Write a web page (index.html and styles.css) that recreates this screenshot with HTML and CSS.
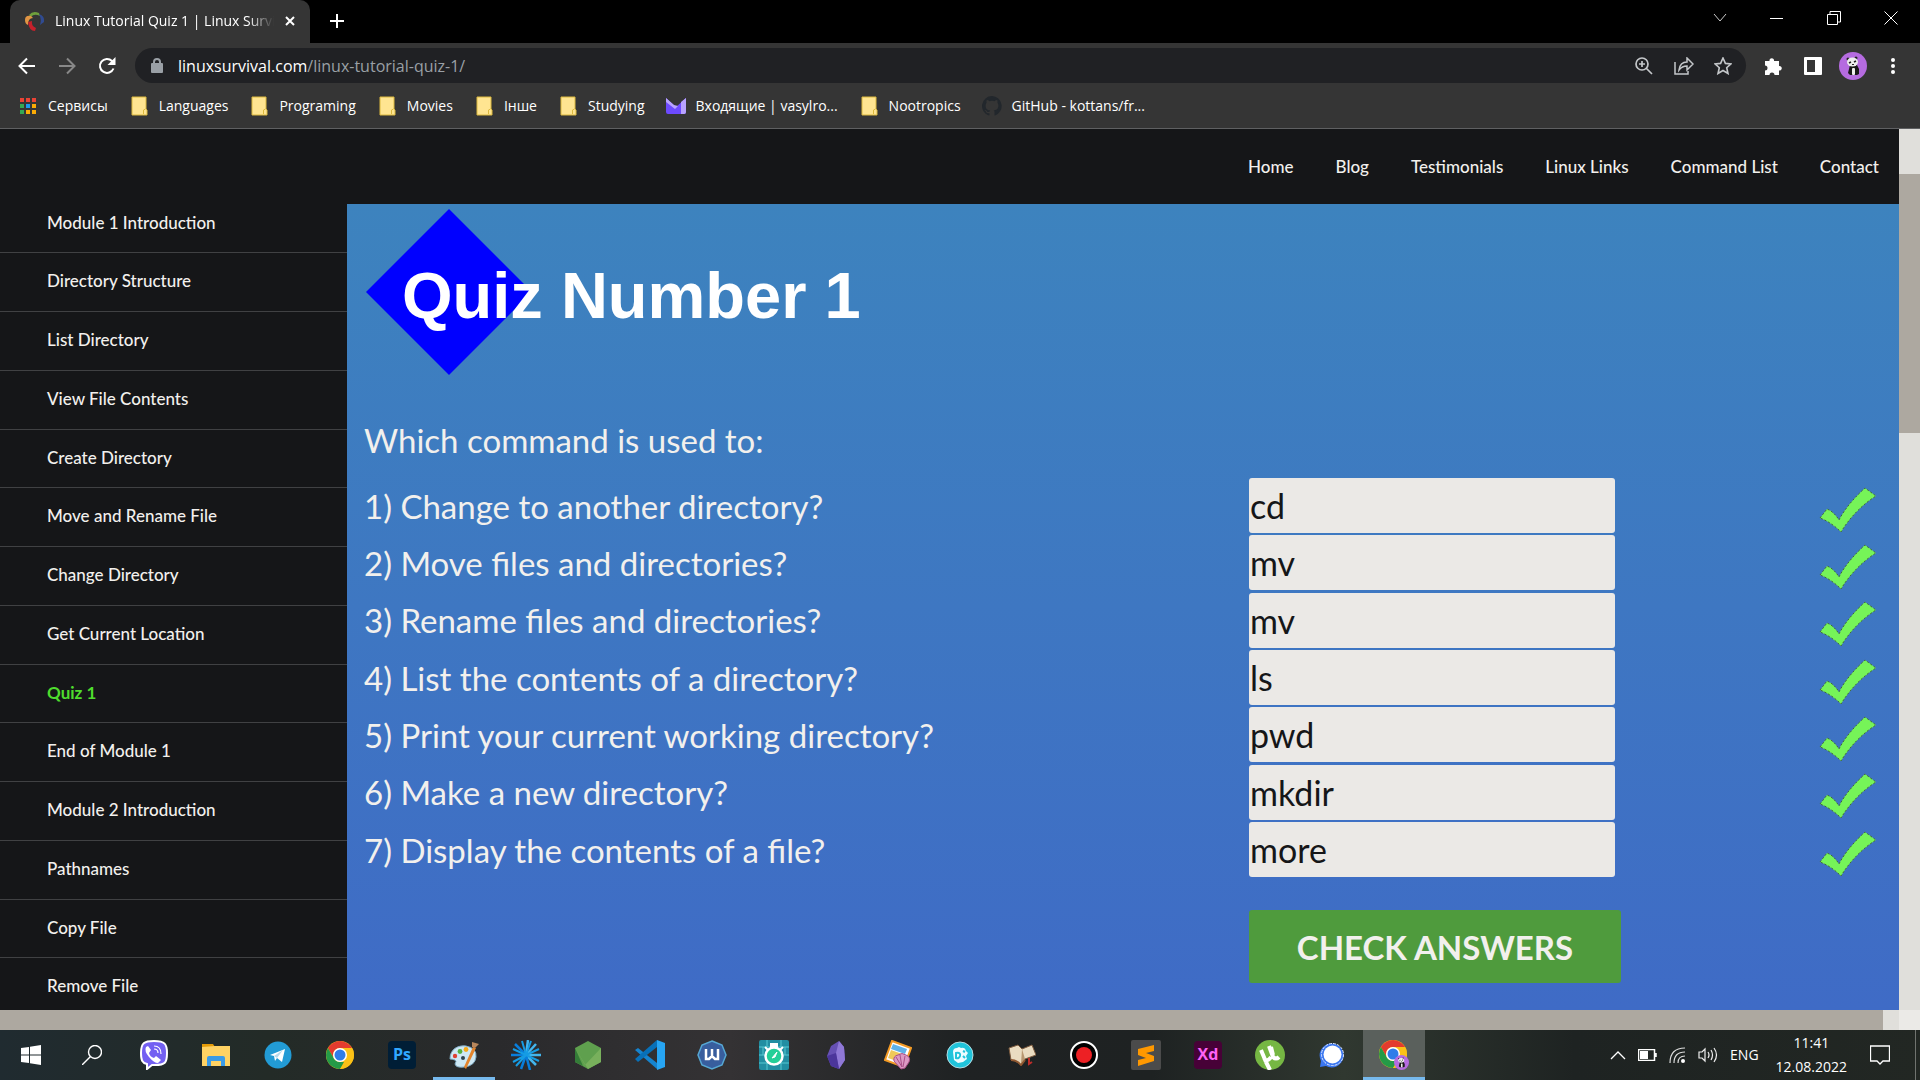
FILE: index.html
```html
<!DOCTYPE html>
<html lang="en">
<head>
<meta charset="utf-8">
<title>Linux Tutorial Quiz 1 | Linux Survival</title>
<link rel="stylesheet" href="styles.css">
</head>
<body>
<svg class="defs" aria-hidden="true">
  <symbol id="folder" viewBox="0 0 20 20"><path d="M3 1h14v12l1 1v5H3z" fill="#ffe591" stroke="#dcb93f"/><path d="M14.500 18v-4l2-1" fill="none" stroke="#dcb93f"/></symbol>
  <symbol id="tick" viewBox="0 0 58 46"><path d="M1 31l7-9c5 2 9 6 12 11C26 21 37 9 46 1l11 8C44 17 31 30 22 45 16 39 9 34 1 31z" fill="#76f458" stroke="#426b35" stroke-dasharray="2 2"/></symbol>
  <symbol id="chrome" viewBox="0 0 28 28"><circle cx="14" cy="14" r="14" fill="#fbc116"/><path d="M1.900 7A14 14 0 0 1 26.100 7H14a7 7 0 0 0-6 10.500z" fill="#e33b2e"/><path d="M1.900 7l6.100 10.500A7 7 0 0 0 14 21h6l-6 7A14 14 0 0 1 1.900 7z" fill="#249a47"/><path d="M20 17.500L14 28a14 14 0 0 0 12.100-21H14z" fill="#fbc116"/><circle cx="14" cy="14" r="7" fill="#fff"/><circle cx="14" cy="14" r="5.500" fill="#2f7de9"/></symbol>
  <symbol id="panda" viewBox="0 0 28 28"><circle cx="14" cy="14" r="14" fill="#b56be0"/><path d="M11 13h7l2 4v5l-2 1h-7l-2-2 1-4z" fill="#181818"/><rect x="13" y="16" width="3" height="7" rx="1" fill="#eee"/><circle cx="9" cy="7" r="1.500" fill="#222"/><circle cx="17" cy="6" r="1.500" fill="#222"/><ellipse cx="13.500" cy="10" rx="5.500" ry="4.500" fill="#eee"/><path d="M10 11l2-1M15 10l2-1" stroke="#222" stroke-width="1.600"/><path d="M13 12.500h2" stroke="#222"/></symbol>
</svg>

<header class="browser">
  <div class="tabstrip">
    <div class="tab">
      <svg width="20" height="20" viewBox="0 0 20 20"><path d="M4 4q4-5 10-2l1 3q-6-3-9 1z" fill="#6f9f3c"/><path d="M0 9q0-5 6-4l2 2q-5 0-5 7-3-1-3-5z" fill="#e09544"/><path d="M3 11l4-1q-1 5 4 7l-1 3q-6 0-7-9z" fill="#c5212b"/><path d="M14 3q6 2 5 8l-4 3q2-5-1-11z" fill="#304b91"/></svg>
      <span class="tab-title">Linux Tutorial Quiz 1 | Linux Survival</span>
      <button class="icon-btn small" aria-label="Close tab"><svg width="10" height="10" viewBox="0 0 10 10"><path d="M1 1l8 8M9 1l-8 8" stroke="#fff" stroke-width="2"/></svg></button>
    </div>
    <button class="icon-btn new-tab" aria-label="New tab"><svg width="16" height="16" viewBox="0 0 16 16"><path d="M8 1v14M1 8h14" stroke="#fff" stroke-width="2"/></svg></button>
    <div class="window-controls">
      <button aria-label="Search tabs"><svg width="14" height="14" viewBox="0 0 14 14"><path d="M1 3l6 7 6-7" fill="none" stroke="#ccc"/></svg></button>
      <button aria-label="Minimize"><svg width="14" height="14" viewBox="0 0 14 14"><path d="M0 7.500h13" stroke="#fff"/></svg></button>
      <button aria-label="Restore"><svg width="14" height="14" viewBox="0 0 14 14"><path d="M.5 3.500h10v10H.5zM3 3V.5h10.500V11H11" fill="none" stroke="#fff"/></svg></button>
      <button aria-label="Close"><svg width="14" height="14" viewBox="0 0 14 14"><path d="M.5 .5l13 13M13.500 .5l-13 13" stroke="#fff"/></svg></button>
    </div>
  </div>
  <div class="toolbar">
    <div class="history">
      <button class="icon-btn" aria-label="Back"><svg width="18" height="18" viewBox="0 0 18 18"><path d="M17 9H2M9 1.500L1.500 9 9 16.500" fill="none" stroke="#fff" stroke-width="2"/></svg></button>
      <button class="icon-btn" aria-label="Forward"><svg width="18" height="18" viewBox="0 0 18 18"><path d="M1 9h15M9 1.500L16.500 9 9 16.500" fill="none" stroke="#888" stroke-width="2"/></svg></button>
      <button class="icon-btn" aria-label="Reload"><svg width="18" height="18" viewBox="0 0 18 18"><path d="M15.500 11.500A7 7 0 1 1 14 4l2 2" fill="none" stroke="#fff" stroke-width="2"/><path d="M17.500 0v8h-8z" fill="#fff"/></svg></button>
    </div>
    <div class="omnibox">
      <svg width="12" height="16" viewBox="0 0 12 16"><path d="M3 6V4a3 3 0 0 1 6 0v2" fill="none" stroke="#9aa0a6" stroke-width="2"/><rect y="5" width="12" height="10" rx="1" fill="#9aa0a6"/></svg>
      <span class="url">linuxsurvival.com<span class="path">/linux-tutorial-quiz-1/</span></span>
      <button class="icon-btn" aria-label="Zoom"><svg width="18" height="18" viewBox="0 0 18 18"><g fill="none" stroke="#c4c7ca" stroke-width="1.700"><circle cx="7" cy="7" r="6"/><path d="M11 11l6 6M7 4v6M4 7h6"/></g></svg></button>
      <button class="icon-btn" aria-label="Share"><svg width="20" height="18" viewBox="0 0 20 18"><path d="M1 5v12h13v-3M5 13q1-8 8-8V1l6 6-6 6V9q-5 0-8 4z" fill="none" stroke="#c4c7ca" stroke-width="1.500"/></svg></button>
      <button class="icon-btn" aria-label="Bookmark"><svg width="18" height="18" viewBox="0 0 18 18"><path d="M9 1l2.400 5.400 5.600.5-4.300 3.800L14 16.500l-5-3-5 3 1.300-5.800L1 6.900l5.600-.5z" fill="none" stroke="#c4c7ca" stroke-width="1.600"/></svg></button>
    </div>
    <div class="extensions">
      <button class="icon-btn" aria-label="Extensions"><svg width="18" height="18" viewBox="0 0 18 18"><path d="M1 4h4.500a2.300 2.300 0 1 1 4.500 0H15v5a2.300 2.300 0 1 1 0 4.500V18h-4.500a2.300 2.300 0 0 0-5 0H1v-4.500a2.300 2.300 0 0 0 0-5z" fill="#fff"/></svg></button>
      <button class="icon-btn" aria-label="Side panel"><svg width="18" height="18" viewBox="0 0 18 18"><rect width="18" height="18" rx="1" fill="#fff"/><path d="M3 3h8v12H3z" fill="#353535"/></svg></button>
      <button class="icon-btn" aria-label="Profile"><svg width="28" height="28"><use href="#panda"/></svg></button>
      <button class="icon-btn" aria-label="Menu"><svg width="4" height="18" viewBox="0 0 4 18"><g fill="#fff"><circle cx="2" cy="3" r="2"/><circle cx="2" cy="9" r="2"/><circle cx="2" cy="15" r="2"/></g></svg></button>
    </div>
  </div>
  <nav class="bookmarks" aria-label="Bookmarks">
    <a href="#"><svg width="20" height="20" viewBox="0 0 20 20"><path d="M2 2h4v4H2zM8 2h4v4H8zM14 2h4v4h-4z" fill="#ea4335"/><path d="M2 8h4v4H2zM2 14h4v4H2z" fill="#34a853"/><path d="M8 8h4v4H8z" fill="#1a9af0"/><path d="M14 8h4v4h-4zM8 14h4v4H8zM14 14h4v4h-4z" fill="#fbab05"/></svg>Сервисы</a>
    <a href="#"><svg width="20" height="20"><use href="#folder"/></svg>Languages</a>
    <a href="#"><svg width="20" height="20"><use href="#folder"/></svg>Programing</a>
    <a href="#"><svg width="20" height="20"><use href="#folder"/></svg>Movies</a>
    <a href="#"><svg width="20" height="20"><use href="#folder"/></svg>Інше</a>
    <a href="#"><svg width="20" height="20"><use href="#folder"/></svg>Studying</a>
    <a href="#"><svg width="20" height="20" viewBox="0 0 20 20"><path d="M0 2l10 9 10-9v14q0 2-2 2H2q-2 0-2-2z" fill="#6d4aff"/><path d="M0 2l8 7 4 1-3 3L0 6zM15 6l5-4v14q0 2-2 2h-3z" fill="#b8a2ff"/></svg>Входящие | vasylro...</a>
    <a href="#"><svg width="20" height="20"><use href="#folder"/></svg>Nootropics</a>
    <a href="#"><svg width="20" height="20" viewBox="0 0 16 16"><path fill="#22272c" d="M8 0a8 8 0 0 0-2.500 15.600c.4.100.5-.2.500-.4v-1.500c-2.200.5-2.700-.9-2.700-.9-.4-.9-.9-1.200-.9-1.200-.7-.5.100-.5.100-.5.800.1 1.200.8 1.200.8.700 1.200 1.900.9 2.300.7.100-.5.300-.9.500-1.100-1.800-.2-3.600-.9-3.600-4 0-.9.300-1.600.8-2.100-.1-.2-.4-1 .1-2.100 0 0 .7-.2 2.200.8a7.500 7.500 0 0 1 4 0c1.500-1 2.200-.8 2.200-.8.400 1.100.2 1.900.1 2.100.5.600.8 1.300.8 2.100 0 3.100-1.900 3.700-3.700 3.900.3.300.6.800.6 1.500v2.200c0 .2.100.5.500.4A8 8 0 0 0 8 0z"/></svg>GitHub - kottans/fr...</a>
  </nav>
</header>

<div class="viewport">
  <div class="site">
    <nav class="topnav" aria-label="Main">
      <a href="#">Home</a><a href="#">Blog</a><a href="#">Testimonials</a><a href="#">Linux Links</a><a href="#">Command List</a><a href="#">Contact</a>
    </nav>
    <div class="columns">
      <nav class="modules" aria-label="Modules">
        <ul>
          <li><a href="#">Module 1 Introduction</a></li>
          <li><a href="#">Directory Structure</a></li>
          <li><a href="#">List Directory</a></li>
          <li><a href="#">View File Contents</a></li>
          <li><a href="#">Create Directory</a></li>
          <li><a href="#">Move and Rename File</a></li>
          <li><a href="#">Change Directory</a></li>
          <li><a href="#">Get Current Location</a></li>
          <li><a href="#" class="current">Quiz 1</a></li>
          <li><a href="#">End of Module 1</a></li>
          <li><a href="#">Module 2 Introduction</a></li>
          <li><a href="#">Pathnames</a></li>
          <li><a href="#">Copy File</a></li>
          <li><a href="#">Remove File</a></li>
        </ul>
      </nav>
      <main class="quiz">
        <h1><svg class="diamond" width="166" height="166" viewBox="0 0 166 166" aria-hidden="true"><path d="M83 0l83 83-83 83L0 83z" fill="#00f"/></svg><span>Quiz Number 1</span></h1>
        <p>Which command is used to:</p>
        <form>
          <table>
            <colgroup><col class="col-question"><col class="col-answer"><col></colgroup>
            <tbody>
              <tr><td><label for="q1">1) Change to another directory?</label></td><td><input type="text" id="q1" value="cd"></td><td class="mark"><svg width="58" height="46"><use href="#tick"/></svg></td></tr>
              <tr><td><label for="q2">2) Move files and directories?</label></td><td><input type="text" id="q2" value="mv"></td><td class="mark"><svg width="58" height="46"><use href="#tick"/></svg></td></tr>
              <tr><td><label for="q3">3) Rename files and directories?</label></td><td><input type="text" id="q3" value="mv"></td><td class="mark"><svg width="58" height="46"><use href="#tick"/></svg></td></tr>
              <tr><td><label for="q4">4) List the contents of a directory?</label></td><td><input type="text" id="q4" value="ls"></td><td class="mark"><svg width="58" height="46"><use href="#tick"/></svg></td></tr>
              <tr><td><label for="q5">5) Print your current working directory?</label></td><td><input type="text" id="q5" value="pwd"></td><td class="mark"><svg width="58" height="46"><use href="#tick"/></svg></td></tr>
              <tr><td><label for="q6">6) Make a new directory?</label></td><td><input type="text" id="q6" value="mkdir"></td><td class="mark"><svg width="58" height="46"><use href="#tick"/></svg></td></tr>
              <tr><td><label for="q7">7) Display the contents of a file?</label></td><td><input type="text" id="q7" value="more"></td><td class="mark"><svg width="58" height="46"><use href="#tick"/></svg></td></tr>
              <tr class="submit-row"><td></td><td><button type="button" class="check">Check answers</button></td><td></td></tr>
            </tbody>
          </table>
        </form>
      </main>
    </div>
  </div>
  <div class="vscroll"><div class="thumb"></div></div>
  <div class="hscroll"><div class="thumb"></div></div>
  <div class="corner"></div>
</div>

<footer class="taskbar">
  <div class="apps">
    <button class="start" aria-label="Start"><svg width="20" height="20" viewBox="0 0 20 20"><path d="M0 3l8-1v7.500H0zM9 1.800L20 0v9.500H9zM0 10.500h8V18l-8-1zM9 10.500h11V20L9 18.200z" fill="#fff"/></svg></button>
    <button aria-label="Search"><svg width="20" height="20" viewBox="0 0 20 20"><circle cx="13" cy="7" r="6.500" fill="none" stroke="#fff" stroke-width="1.400"/><path d="M8.500 11.500L0 20" stroke="#fff" stroke-width="1.400"/></svg></button>
    <button aria-label="Viber"><svg width="30" height="30" viewBox="0 0 30 30"><path d="M15 1c11 0 13 3 13 12 0 10-2 12-12 12h-3l-5 4v-5c-5-1-6-4-6-11C2 3 5 1 15 1z" fill="#7360f2" stroke="#fff" stroke-width="2"/><path d="M9 6l3 4-2 3q1 4 5 5l2-2 5 4-3 3q-4 0-9-6-5-6-3-10z" fill="#fff"/><path d="M15 6q7 0 7 8M15 9q4 0 4 4" fill="none" stroke="#fff" stroke-width="1.200"/></svg></button>
    <button aria-label="File Explorer"><svg width="28" height="24" viewBox="0 0 28 24"><path d="M0 1h11l2 3H0z" fill="#e49b08"/><path d="M0 4l13-1h15v20H0z" fill="#ffd263"/><path d="M5 23v-8q0-2 2-2h14q2 0 2 2v8h-4v-5H9v5z" fill="#3b9be6"/></svg></button>
    <button aria-label="Telegram"><svg width="28" height="28" viewBox="0 0 28 28"><circle cx="14" cy="14" r="13.500" fill="#229bd5"/><path d="M6 14l15-6-3 13-5-4-2 3-1-5z" fill="#fff"/><path d="M10 15l9-6-6 8z" fill="#b8d9eb"/></svg></button>
    <button aria-label="Chrome"><svg width="28" height="28"><use href="#chrome"/></svg></button>
    <button aria-label="Photoshop"><span class="tile ps">Ps</span></button>
    <button class="running" aria-label="Paint"><svg width="30" height="30" viewBox="0 0 30 30"><path d="M1 19C1 9 9 5 17 6q11 2 10 11-1 9-12 10-8 1-9-3 2-3 0-4-3-1-5-1z" fill="#cee8f4" stroke="#82aec6"/><circle cx="6" cy="16" r="2.200" fill="#df4134"/><circle cx="11" cy="11.500" r="2.400" fill="#56b140"/><circle cx="17" cy="9.500" r="2.400" fill="#f5a91a"/><circle cx="14" cy="18" r="2" fill="#30444e"/><path d="M24 7l3 1-10 21-2-2z" fill="#e3842c"/><path d="M23 2l7 2-4 4-3-1z" fill="#b9875c"/></svg></button>
    <button aria-label="Burst"><svg width="30" height="30" viewBox="0 0 30 30"><g stroke-width="2.500"><path d="M15 15L17 0M15 15l10-11M15 15h15M15 15l10 10" stroke="#43b6ee"/><path d="M15 15L4 4M15 15l-5 14M15 15l4 15M15 15H0" stroke="#087edb"/><path d="M15 15L11 1M15 15l-13 7M15 15l13 6M15 15L5 26M15 15l13-6M15 15L20 1M15 15L2 9" stroke="#159ce4" stroke-width="2"/></g></svg></button>
    <button aria-label="Node.js"><svg width="26" height="30" viewBox="0 0 26 30"><path d="M13 1l13 7v14l-13 7-13-7V8z" fill="#5fa04e"/><path d="M0 8l10 17 16-17v14l-13 7z" fill="#78b05c"/><path d="M0 8l8 18-8-4z" fill="#347c38"/></svg></button>
    <button aria-label="Visual Studio Code"><svg width="30" height="30" viewBox="0 0 30 30"><path d="M0 10l3-2 19 15v6z" fill="#1684cf"/><path d="M22 0v7L3 22l-3-3z" fill="#0870b8"/><path d="M22 0l8 3v24l-8 3z" fill="#27a5f3"/></svg></button>
    <button aria-label="WebStorm"><svg width="30" height="30" viewBox="0 0 30 30"><path d="M15 1l10 4 4 10-4 10-10 4-10-4-4-10L5 5z" fill="#385e9e" stroke="#56a8d4" stroke-width="1.500"/><path d="M9 9v10h3l3-3 3 3h3V9M15 9v8" fill="none" stroke="#fff" stroke-width="2.500"/></svg></button>
    <button aria-label="Stopwatch"><svg width="30" height="30" viewBox="0 0 30 30"><rect width="30" height="30" rx="2" fill="#218ea2"/><path d="M0 7h30M0 15h30M0 23h30M8 0v7M22 0v7M4 7v8M26 7v8M8 23v7M22 23v7" stroke="#56c8d1"/><path d="M12 4h6v3h-6zM6 7l3 3M24 7l-3 3" fill="#fff" stroke="#fff" stroke-width="2"/><circle cx="15" cy="16" r="8.500" fill="#24cf98" stroke="#fff" stroke-width="2.500"/><path d="M13 18l5-6-2 5z" fill="#fff" stroke="#fff"/></svg></button>
    <button aria-label="Obsidian"><svg width="18" height="28" viewBox="0 0 18 28"><path d="M12 0l5 6 1 13-6 9-8-3-4-10L4 5z" fill="#6650b4"/><path d="M12 0L9 12l3 16 6-9-1-13z" fill="#8f78d6"/><path d="M0 15l9-3 3 16-8-3z" fill="#4b359b"/></svg></button>
    <button aria-label="Pictures"><svg width="28" height="30" viewBox="0 0 28 30"><path d="M8 1l19 7-7 19-19-7z" fill="#fff" stroke="#f39a24" stroke-width="2"/><path d="M9 4l14 5-2 5L7 9z" fill="#5fb2e9"/><path d="M7 10l14 5-3 8-14-5z" fill="#efc95a"/><path d="M17 29l-7-8q-1-5 4-6 4-3 8 0 5 2 3 7l-4 6z" fill="#dc9ac4" stroke="#a94e88"/><path d="M12 17l6 10M16 15l2 12M21 16l-2 11" stroke="#a94e88"/></svg></button>
    <button aria-label="Dev tool"><svg width="28" height="28" viewBox="0 0 28 28"><circle cx="14" cy="14" r="13" fill="#20c4db" stroke="#b4dce2"/><path d="M7 11q0-4 4-4l2-1 2 1q4-1 5 3l2 2-2 3 1 3-4 3-5 1-4-3z" fill="#eefcff"/><path d="M10 12q5-1 4 3-1 3-4 2zM17 10l2 1M17 15l2 2" fill="none" stroke="#20c4db" stroke-width="2"/></svg></button>
    <button aria-label="Reader"><svg width="28" height="22" viewBox="0 0 28 22"><path d="M1 4l9-3 4 4 10-4 4 10-11 4-4 6q-5-5-10-5z" fill="#eadcc1" stroke="#7d5b3e"/><path d="M14 5l-1 15 4-5" fill="#b89770"/><path d="M3 16q6 0 10 5l4-5" fill="none" stroke="#905831" stroke-width="2"/><path d="M21 14v6l3-2" fill="none" stroke="#bf2d2a" stroke-width="2"/></svg></button>
    <button aria-label="Recorder"><svg width="28" height="28" viewBox="0 0 28 28"><circle cx="14" cy="14" r="13" fill="#000" stroke="#fff" stroke-width="2"/><circle cx="14" cy="14" r="8" fill="#ed2024"/></svg></button>
    <button aria-label="Sublime Text"><svg width="30" height="30" viewBox="0 0 30 30"><rect width="30" height="30" rx="2" fill="#4b4b4b"/><path d="M7 9l16-4v6l-8 2 8 3v5L7 26v-6l8-2-8-3z" fill="#ff9800"/></svg></button>
    <button aria-label="Adobe XD"><span class="tile xd">Xd</span></button>
    <button aria-label="uTorrent"><svg width="30" height="30" viewBox="0 0 30 30"><circle cx="15" cy="15" r="15" fill="#76b743"/><path d="M6 10l5 12M9 18q3 5 7-1M14 6l4 11q3 3 6 0M18 15l-2-8M11 22l4 8" fill="none" stroke="#fff" stroke-width="4"/></svg></button>
    <button aria-label="Signal"><svg width="26" height="26" viewBox="0 0 26 26"><path d="M1 25l1-6a12 12 0 1 1 5 5z" fill="#3a76f0"/><circle cx="13.500" cy="12.500" r="11" fill="none" stroke="#dfe9ff" stroke-dasharray="3 1"/><circle cx="13.500" cy="12.500" r="9" fill="#fff"/></svg></button>
    <button class="running active" aria-label="Chrome, personal profile"><svg width="30" height="30" viewBox="0 0 30 30"><use href="#chrome" width="28" height="28"/><use href="#panda" x="15" y="15" width="15" height="15"/></svg></button>
  </div>
  <div class="tray">
    <svg width="16" height="10" viewBox="0 0 16 10"><path d="M1 9l7-7 7 7" fill="none" stroke="#fff" stroke-width="1.300"/></svg>
    <svg width="19" height="12" viewBox="0 0 19 12"><path d="M.5 .5h16v11H.5zM18 4v4" fill="none" stroke="#fff" stroke-width="1.500"/><path d="M2 2h8v8H2z" fill="#fff"/></svg>
    <svg width="17" height="17" viewBox="0 0 17 17"><g fill="none" stroke="#ddd" stroke-width="1.200"><path d="M1 16Q1 1 16 1M5 16Q5 5 16 5M9 16Q9 9 16 9"/></g><circle cx="14" cy="14" r="2" fill="#fff"/></svg>
    <svg width="20" height="18" viewBox="0 0 20 18"><g fill="none" stroke="#eee" stroke-width="1.200"><path d="M1 6h3l3-3v12l-3-3H1zM10 6q2 3 0 6M13 4q3 5 0 10M16 2q5 7 0 14"/></g></svg>
    <span>ENG</span>
    <time class="clock" datetime="2022-08-12T11:41"><span>11:41</span><span>12.08.2022</span></time>
    <svg width="20" height="20" viewBox="0 0 20 20"><path d="M.5 1h19v15H13l-3 3-3-3H.5z" fill="none" stroke="#fff" stroke-width="1.300"/></svg>
  </div>
  <button class="show-desktop" aria-label="Show desktop"></button>
</footer>
</body>
</html>
```
FILE: styles.css
```css
* { box-sizing: border-box; }
body {
  margin: 0;
  height: 100vh;
  display: flex;
  flex-direction: column;
  overflow: hidden;
  font: 14px/20px "Open Sans", "Noto Sans", sans-serif;
  color: #fff;
  background: #151618;
}
.defs { display: none; }
svg { display: block; flex: none; }
a { color: inherit; text-decoration: none; }
button {
  padding: 0;
  border: 0;
  background: none;
  color: inherit;
  font: inherit;
}
.icon-btn, .window-controls button, .apps button {
  display: flex;
  align-items: center;
  justify-content: center;
}
.icon-btn { width: 40px; flex: none; }

/* Browser frame */
.browser { flex: none; background: #353535; border-bottom: 1px solid #5f6062; }
.tabstrip { display: flex; height: 43px; background: #000; padding-left: 10px; }
.tab {
  width: 300px;
  display: flex;
  align-items: center;
  padding: 0 10px 2px 15px;
  background: #353535;
  border-radius: 10px 10px 0 0;
}
.tab-title {
  flex: 1;
  margin: 0 6px 0 10px;
  overflow: hidden;
  white-space: nowrap;
  mask-image: linear-gradient(to right, #000 88%, transparent);
}
.icon-btn.small { width: 20px; }
.new-tab { margin-left: 7px; padding-bottom: 2px; }
.window-controls { display: flex; margin-left: auto; height: 36px; padding-right: 1px; }
.window-controls button { width: 57px; }
.toolbar { display: flex; height: 45px; padding: 5px 7px 5px 7px; }
.history { display: flex; width: 128px; }
.omnibox {
  flex: 1;
  display: flex;
  align-items: center;
  gap: 15px;
  padding: 0 3px 0 16px;
  border-radius: 18px;
  background: #202124;
  font-size: 16px;
}
.omnibox .icon-btn { width: 25px; }
.omnibox .icon-btn:last-child { width: 40px; margin-left: -8px; }
.url { flex: 1; }
.path { color: #9aa0a6; }
.extensions { display: flex; padding-left: 7px; }
.bookmarks { display: flex; gap: 21px; height: 40px; padding: 0 18px 4px; align-items: center; }
.bookmarks a { display: flex; align-items: center; gap: 10px; white-space: nowrap; }

/* Page and its scroll bars */
.viewport {
  flex: 1;
  min-height: 0;
  display: grid;
  grid-template: minmax(0, 1fr) 20px / minmax(0, 1fr) 21px;
}
.site {
  display: flex;
  flex-direction: column;
  overflow: hidden;
  font: 500 17px/20px Lato, sans-serif;
  color: #f2f0ed;
}
.vscroll { background: #e0dfdb; padding-top: 45px; }
.vscroll .thumb { height: 31%; background: #ada8a0; }
.hscroll { background: #e0dfdb; padding-right: 16px; }
.hscroll .thumb { height: 100%; background: #ada8a0; }
.corner { background: #ebeae7; }

.topnav {
  flex: none;
  display: flex;
  justify-content: flex-end;
  align-items: center;
  gap: 42px;
  height: 75px;
  padding-right: 20px;
}
.columns { flex: 1; min-height: 0; display: flex; }
.modules { width: 347px; flex: none; overflow: hidden; }
.modules ul { list-style: none; margin: -9px 0 0; padding: 0; }
.modules li { height: 59px; padding: 18px 47px; border-bottom: 1px solid #404143; }
.modules li:nth-child(4n + 1) { height: 58px; }
.modules .current { color: #4fdc2e; font-weight: 700; }

.quiz {
  flex: 1;
  overflow: hidden;
  padding: 5px 17px;
  background: linear-gradient(#3d83be, #3f6bc6);
  font: 400 33px/44px Lato, sans-serif;
}
.quiz h1 {
  display: grid;
  align-items: center;
  margin: 0 0 43px;
  padding-left: 2px;
  font: 700 65px/76px "Liberation Sans", Arial, sans-serif;
  color: #fff;
}
.quiz h1 > * { grid-area: 1 / 1; }
.quiz h1 span { padding: 8px 0 0 36px; }
.quiz p { margin: 0 0 15px; }
.quiz table { width: 100%; table-layout: fixed; border-collapse: collapse; }
.quiz td { padding: 0; height: 57px; vertical-align: middle; }
.quiz tr:nth-child(3n) td { height: 58px; }
.quiz .mark { padding-top: 8px; }
.mark svg { margin-left: -1px; }
.col-question { width: 58.3%; }
.col-answer { width: 37.6%; }
.quiz input {
  display: block;
  width: 366px;
  height: 55px;
  padding: 0 1px;
  border: 0;
  border-radius: 3px;
  background: #ebe9e6;
  color: #151618;
  font: inherit;
  font-size: 34px;
}
.quiz .submit-row td { height: 105px; vertical-align: bottom; }
.check {
  display: block;
  width: 372px;
  height: 73px;
  border-radius: 3px;
  background: #4f9b3d;
  font-weight: 700;
  text-transform: uppercase;
}

/* Taskbar */
.taskbar {
  flex: none;
  display: flex;
  height: 50px;
  background: linear-gradient(to right, #202b30, #232b27 14%, #2a2a2c 26%, #343234 38%, #1f2223 50%, #1e2222 60%, #303830 70%, #1e2322 82%, #222723);
}
.apps { display: flex; }
.apps button { width: 62px; }
.apps .start { width: 61px; }
.apps .running { border-bottom: 3px solid #76b9ed; padding-top: 3px; }
.apps .active { background-color: #5a605c; }
.tile { width: 28px; height: 28px; border-radius: 4px; font: 700 16px/26px "Open Sans", sans-serif; text-align: center; }
.ps { background: #001e36; color: #31a8ff; }
.xd { background: #470137; color: #ff61f6; }
.tray { display: flex; align-items: center; gap: 12px; margin-left: auto; padding-right: 25px; }
.clock { display: flex; flex-direction: column; align-items: center; gap: 4px; padding: 0 11px 0 5px; }
.show-desktop { width: 5px; border-left: 1px solid #70736f; }
```
